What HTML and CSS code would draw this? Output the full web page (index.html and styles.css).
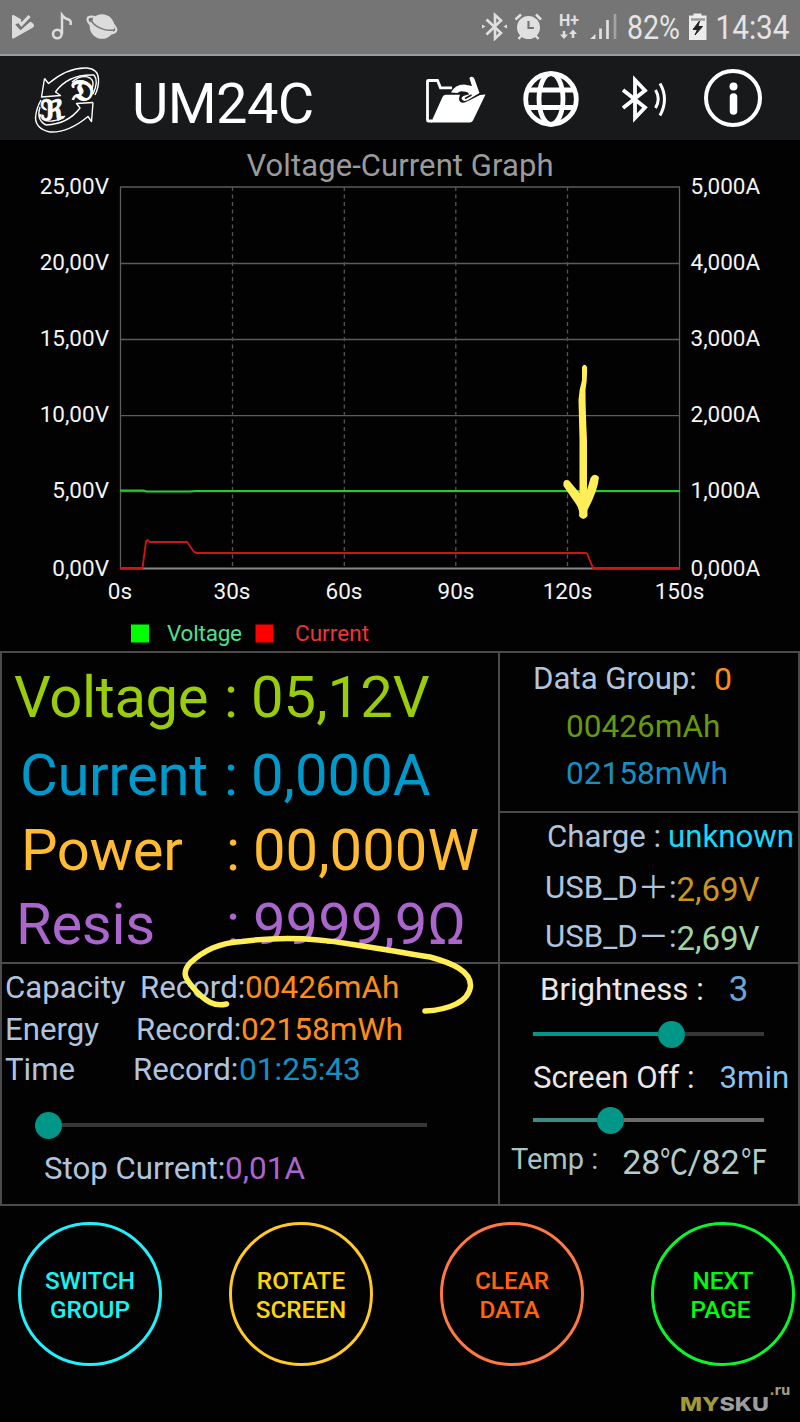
FILE: index.html
```html
<!DOCTYPE html>
<html lang="en">
<head>
<meta charset="utf-8">
<title>UM24C</title>
<link rel="stylesheet" href="styles.css">
</head>
<body>
<div class="screen">
  <header class="status">
    <svg class="status-svg" viewBox="0 0 800 53" width="800" height="53">
      <path d="M12 16Q12 14.500 13.500 15L21.500 19.500L19.500 22L16 25L20.500 29.500L30.500 21.500L33 23.500Q35 25.500 33 27.500L14 38.300Q12 39 12 37.500Z" fill="#dcdcdc"/>
      <path d="M18.500 20.500L21.500 24.500L29.500 16" fill="none" stroke="#dcdcdc" stroke-width="3.200"/>
      <path d="M16 24L20.500 29L30.500 20" fill="none" stroke="#757575" stroke-width="1.800"/>
      <circle cx="57.300" cy="34" r="4.300" fill="none" stroke="#dcdcdc" stroke-width="2.600"/>
      <path d="M62 34V15Q65 19 68.500 19.500Q71.500 20.500 70.500 25" fill="none" stroke="#dcdcdc" stroke-width="2.500"/>
      <circle cx="102" cy="26.500" r="12.300" fill="#dcdcdc"/>
      <path d="M95 17C85 15 86 21 92 26C100 32 113 36 116 31C117.500 28.500 113 24 111.500 22.500" fill="none" stroke="#dcdcdc" stroke-width="2.200"/>
      <path d="M92.500 18.500C88 22 102 32 114 30" fill="none" stroke="#757575" stroke-width="1.600"/>
      <path d="M486.500 19.500L501 33L495 38.500V15L501 20.500L486.500 34.500" fill="none" stroke="#e0e0e0" stroke-width="2.600"/>
      <path d="M482 24.500L485.500 26.500L482 28.500ZM507 24.500L503.500 26.500L507 28.500Z" fill="#e0e0e0"/>
      <circle cx="528.500" cy="27.500" r="11.500" fill="#e0e0e0"/>
      <path d="M515.500 19.500L521 14.500M541 19.500L536 14.500M518.500 39L522 35M538.500 39L535 35" stroke="#e0e0e0" stroke-width="2.500"/>
      <path d="M528.500 21V28H534" fill="none" stroke="#757575" stroke-width="2.200"/>
      <text x="559" y="25.500" class="net" textLength="20" lengthAdjust="spacingAndGlyphs">H+</text>
      <path d="M564 31V37M573 38V32" stroke="#e0e0e0" stroke-width="2.500"/>
      <path d="M560 34.500H568L564 39ZM569 34H577L573 29.500Z" fill="#e0e0e0"/>
      <path d="M590 39L595.500 34V39Z" fill="#e0e0e0"/>
      <path d="M600.500 39V28.500M607.500 39V20" stroke="#e0e0e0" stroke-width="2.700"/>
      <path d="M615 39V14" stroke="#a3a3a3" stroke-width="2.700"/>
      <text x="627" y="39" class="clock" textLength="53" lengthAdjust="spacingAndGlyphs">82%</text>
      <path d="M689 15.500H693.500V13.500H701.500V15.500H706.500V40H689Z" fill="#ececec"/>
      <path d="M691 19.500H705" stroke="#999" stroke-width="2.500"/>
      <path d="M699.500 21L693 29.500H697.500L695 35L702.500 26.500H698Z" fill="#222" stroke="#222"/>
      <text x="715.500" y="39" class="clock" textLength="74" lengthAdjust="spacingAndGlyphs">14:34</text>
    </svg>
  </header>

  <div class="appbar">
    <svg class="logo" viewBox="0 0 70 70" width="70" height="70">
      <g fill="none" stroke="#fff" stroke-width="1.400" stroke-linejoin="round">
        <path d="M12.500 14.500L9.500 33L28.500 31.500L23.500 28Q36 10 62 11"/>
        <path d="M12.500 14.500L16.500 19.500Q36 3 55 4Q66 5 66.500 15Q67 23 63 31"/>
        <path d="M62 11Q67 17 61 30M40 18Q50 10 58 14Q63 17 60 25"/>
        <path d="M61 38.500L44.500 39.500L48 44Q36 60 14 61"/>
        <path d="M61 38.500L59.500 57.500L56 52.500Q36 69 18 68Q4 65 3.500 54Q4 45 9 36"/>
        <path d="M14 61Q4 56 8 43M8 50Q9 58 20 57Q28 56 33 52"/>
      </g>
      <text x="8" y="55.500" class="rune" textLength="24" lengthAdjust="spacingAndGlyphs">ℜ</text>
      <text x="39" y="35.500" class="rune" textLength="23" lengthAdjust="spacingAndGlyphs">𝔇</text>
    </svg>
    <h1 class="title">UM24C</h1>
    <svg class="actions" viewBox="0 0 400 84" width="400" height="84">
      <g transform="translate(0 -1)">
        <path d="M32 66H28Q27.500 66 27.500 65V26Q27.500 25.500 28.500 25.500H37.500L40.500 32.800H52" fill="none" stroke="#fff" stroke-width="2.800"/>
        <path d="M31 67.500L42.500 42Q43.500 39.800 46 39.800H60Q57.500 46 61.500 47.500Q64 48.500 68 46L80 40L85.500 39.500L73 65.500Q72 67.500 69.500 67.500Z" fill="#fff"/>
        <path d="M51 37.500Q55 29.500 64 29.500L72 31L69.500 23.500Q69.500 21.500 72 21.800Q73.800 22 74.500 24L79.500 38L67 45.500Q62.500 47 61.500 43.500Q61.500 40.500 69 39.500Q68.500 36.500 63.500 36.500Q60 35.500 57.500 38Z" fill="#fff"/>
        <path d="M65 43.500L71.500 40" stroke="#17191b" fill="none" stroke-width="1.500"/>
      </g>
      <g fill="none" stroke="#fff" stroke-width="4.800">
        <circle cx="151" cy="43" r="25.300"/>
        <ellipse cx="151" cy="43" rx="12" ry="25.300"/>
        <path d="M128 34H174M128 51.500H174"/>
      </g>
      <path d="M223 34L245 51.500L235 62V24L245 34.500L223 52" fill="none" stroke="#fff" stroke-width="3.800"/>
      <path d="M255.500 34Q261 43 255.500 52M260 27.500Q269 43 260 59.500" fill="none" stroke="#fff" stroke-width="3"/>
      <circle cx="333" cy="42" r="27" fill="none" stroke="#fff" stroke-width="4"/>
      <circle cx="333.500" cy="30.500" r="4" fill="#fff"/>
      <path d="M333.500 41V55" stroke="#fff" stroke-width="7.500" stroke-linecap="round"/>
    </svg>
  </div>

  <section class="chart">
    <svg viewBox="0 140 800 511" width="800" height="511">
      <text x="400" y="176" class="chart-title" text-anchor="middle" textLength="307">Voltage-Current Graph</text>
      <g stroke="#5c5c5c" stroke-width="1.300">
        <path d="M120 187H680M120 263.500H680M120 339.500H680M120 415.700H680M120 491.500H680"/>
        <path d="M120.500 187V568.500M679.500 187V568.500"/>
      </g>
      <path d="M120 568.500H680" stroke="#888" stroke-width="2"/>
      <path d="M232.500 187V568M344.300 187V568M455.800 187V568M567.500 187V568" stroke="#555" stroke-width="1.300" stroke-dasharray="4 3.500"/>
      <path d="M120 490.500H143L147 491.500H190L195 491H680" fill="none" stroke="#22cc2c" stroke-width="2"/>
      <path d="M120 568H142.500L146 541.500L147.500 540L150 542H187L194 552L197 553H585L587 553.500L593 568H680" fill="none" stroke="#cd1518" stroke-width="1.900"/>
      <g class="tick" text-anchor="end">
        <text x="109" y="193.700">25,00V</text><text x="109" y="269.800">20,00V</text><text x="109" y="346">15,00V</text>
        <text x="109" y="422.200">10,00V</text><text x="109" y="498.400">5,00V</text><text x="109" y="575.500">0,00V</text>
      </g>
      <g class="tick">
        <text x="690.500" y="193.700">5,000A</text><text x="690.500" y="269.800">4,000A</text><text x="690.500" y="346">3,000A</text>
        <text x="690.500" y="422.200">2,000A</text><text x="690.500" y="498.400">1,000A</text><text x="690.500" y="575.500">0,000A</text>
      </g>
      <g class="tick" text-anchor="middle">
        <text x="120" y="598.500">0s</text><text x="232" y="598.500">30s</text><text x="344" y="598.500">60s</text>
        <text x="456" y="598.500">90s</text><text x="567.500" y="598.500">120s</text><text x="679.500" y="598.500">150s</text>
      </g>
      <path d="M131 624.500H149V642.500H131Z" fill="#0f0"/>
      <path d="M255.500 624.500H273.500V642.500H255.500Z" fill="#f00"/>
      <text x="167" y="641.200" class="tick green" textLength="75">Voltage</text>
      <text x="295" y="641.200" class="tick red" textLength="74">Current</text>
    </svg>
  </section>

  <main class="monitor">
    <div class="col left">
      <section class="cell readings">
        <div class="reading volt"><span>Voltage</span><span>:</span><span>05,12V</span></div>
        <div class="reading amp"><span>Current</span><span>:</span><span>0,000A</span></div>
        <div class="reading watt"><span>Power</span><span>:</span><span>00,000W</span></div>
        <div class="reading ohm"><span>Resis</span><span>:</span><span>9999,9Ω</span></div>
      </section>
      <section class="cell records">
        <div class="record r1"><span>Capacity</span><span>Record:</span><b class="orange">00426mAh</b></div>
        <div class="record r2"><span>Energy</span><span>Record:</span><b class="orange">02158mWh</b></div>
        <div class="record r3"><span>Time</span><span>Record:</span><b class="blue">01:25:43</b></div>
        <div class="slider stop"><i class="fill"></i><i class="thumb"></i><i class="rest"></i></div>
        <div class="record stop-row"><span>Stop Current:</span><b class="purple">0,01A</b></div>
      </section>
    </div>
    <div class="col right">
      <section class="cell group">
        <div class="row g1"><span>Data Group:</span><b class="orange">0</b></div>
        <div class="row g2">00426mAh</div>
        <div class="row g3">02158mWh</div>
      </section>
      <section class="cell charge">
        <div class="row c1"><span>Charge :</span><b>unknown</b></div>
        <div class="row c2"><span>USB_D<em>＋</em>:</span><b>2,69V</b></div>
        <div class="row c3"><span>USB_D<em>－</em>:</span><b>2,69V</b></div>
      </section>
      <section class="cell settings">
        <div class="row s1"><span>Brightness :</span><b>3</b></div>
        <div class="slider bright"><i class="fill"></i><i class="thumb"></i><i class="rest"></i></div>
        <div class="row s2"><span>Screen Off :</span><b>3min</b></div>
        <div class="slider off"><i class="fill"></i><i class="thumb"></i><i class="rest"></i></div>
        <div class="row s3"><span>Temp :</span><b>28<em>℃</em>/82<em>℉</em></b></div>
      </section>
    </div>
  </main>

  <nav class="buttons">
    <button class="round cyan">SWITCH<br>GROUP</button>
    <button class="round gold">ROTATE<br>SCREEN</button>
    <button class="round coral">CLEAR<br><span class="nudge">DATA</span></button>
    <button class="round lime">NEXT<br><span class="nudge">PAGE</span></button>
  </nav>

  <footer class="brand">
    <svg viewBox="0 0 120 40" width="120" height="40">
      <text x="0" y="28.500" class="mysku" textLength="89" lengthAdjust="spacingAndGlyphs"><tspan fill="#a09a3c">MY</tspan><tspan fill="#9d9d9d">SKU</tspan></text>
      <text x="89.500" y="13" class="ru" textLength="21" lengthAdjust="spacingAndGlyphs"><tspan fill="#a09a3c">.</tspan><tspan fill="#9d9d8c">ru</tspan></text>
    </svg>
  </footer>

  <!-- hand-drawn marks over the chart and the capacity record -->
  <svg class="marks" viewBox="0 0 800 1422" width="800" height="1422">
    <path d="M582 367Q584.500 362.500 587 367Q587.500 378 585.500 390Q585.500 410 587 440L587 490L590.500 478Q594 472 599 477Q598 490 587.500 510V516Q583.500 522 579 516Q580 510 576 504L563.500 486Q562.500 478.500 569 480.500L579.500 493V440L578.500 400Q579 390 582 380Z" fill="#ffee58"/>
    <path d="M226.500 1004C214 1007 206 1001 197 992C185 979 181 973 190 963C204 950 219 943 242 941.500C275 937 310 937 350 944C383 949 405 953 430 957C452 963 471 971 470.500 986C469 1002 448 1010 425 1011" fill="none" stroke="#ffee58" stroke-width="5.500" stroke-linecap="round" stroke-linejoin="round"/>
  </svg>
</div>
</body>
</html>
```
FILE: styles.css
```css
* { box-sizing: border-box; }
body { margin: 0; background: #020202; font-family: Roboto, "Noto Sans CJK SC", sans-serif; }
svg { display: block; }
b, i, em { font-weight: 400; font-style: normal; }

.screen { position: relative; width: 800px; height: 1422px; overflow: hidden; background: #020202; }
.status { height: 56px; background: #757575; border-bottom: 2px solid #9b9b9b; }
.clock { font-size: 33px; fill: #e4e4e4; }
.net { font-size: 16px; font-weight: 700; fill: #e0e0e0; }

.appbar { display: flex; height: 84px; background: #17191b; }
.logo { margin: 8px 0 0 32px; }
.rune { font: 700 28px "DejaVu Sans", "DejaVu Serif", serif; fill: #fff; stroke: #fff; stroke-width: 0.800px; }
.title { width: 268px; margin: 0; padding-left: 30px; font-size: 56px; font-weight: 400; line-height: 97px; letter-spacing: -0.600px; color: #fff; }
.actions { margin-left: 30px; }

.chart { height: 511px; }
.chart-title { font-size: 31px; fill: #9a9a9a; }
.tick { font-size: 22.500px; fill: #f4f4f4; }
.green { fill: #4fe08a; }
.red { fill: #ee3434; }

.monitor { display: flex; height: 555px; border: 2px solid #4b4b4b; }
.left { width: 498px; border-right: 2px solid #4b4b4b; }
.right { flex: 1; }
.cell + .cell { border-top: 2px solid #4b4b4b; }

.readings { height: 309px; padding-top: 14px; }
.reading { display: grid; grid-template-columns: 222px 27px 1fr; font-size: 58px; line-height: 60px; white-space: nowrap; }
.reading span:first-child { letter-spacing: -0.350px; }
.volt { color: #99cc0a; }
.volt span:first-child { padding-left: 12px; }
.amp { margin-top: 17.500px; color: #0099cc; }
.amp span:first-child { padding-left: 18px; }
.watt { margin-top: 15.500px; grid-template-columns: 224px 27px 1fr; color: #ffbb33; }
.watt span:first-child { padding-left: 19px; }
.ohm { margin-top: 13.500px; grid-template-columns: 224px 27px 1fr; color: #aa66cc; }
.ohm span:first-child { padding-left: 14px; }

.records { height: 242px; padding-top: 4px; }
.record { display: grid; font-size: 31.200px; line-height: 40px; color: #b0c4de; white-space: nowrap; }
.record span:first-child { padding-left: 3px; }
.record b { font-size: 31.600px; }
.r1 { grid-template-columns: 138px 105px 1fr; }
.r2 { grid-template-columns: 134px 105px 1fr; margin-top: 2px; }
.r3 { grid-template-columns: 131px 106px 1fr; }
.orange { color: #ff8c1a; }
.blue { color: #1590c4; }
.purple { color: #aa66cc; }
.stop-row { grid-template-columns: 223px 1fr; margin-top: 10px; }
.stop-row span:first-child { padding-left: 42px; }

.slider { display: flex; align-items: center; height: 28px; }
.fill { height: 4px; background: #009688; }
.rest { flex: 1; height: 4px; background: #363636; }
.thumb { width: 27px; height: 27px; border-radius: 50%; background: #009688; }
.stop { width: 392px; margin: 21px 0 0 33px; }
.bright { width: 231px; margin: 10px 0 0 33px; }
.bright .fill { width: 125px; }
.off { width: 231px; margin: 8px 0 0 33px; }
.off .fill { width: 64px; background: #3f8a84; }
.off .rest { background: #6c6a6c; }

.row { display: flex; font-size: 31.200px; line-height: 40px; color: #b0c4de; white-space: nowrap; }
.group { height: 158px; padding-top: 6px; }
.g1 { padding-left: 33px; }
.g1 b { margin-left: 17px; font-size: 32px; }
.g2 { margin: 8px 0 0 66px; font-size: 31.600px; color: #669910; }
.g3 { margin: 7px 0 0 66px; font-size: 31.600px; color: #1590c4; }
.charge { height: 151px; padding-top: 4px; }
.c1 { padding-left: 47px; }
.c1 b { margin-left: 7px; color: #18d8f8; }
.c2 { margin-top: 11px; padding-left: 45px; }
.c3 { margin-top: 9px; padding-left: 45px; }
.c2 b, .c3 b { height: 40px; padding-top: 2px; font-size: 33px; }
.c2 b { color: #cc9420; }
.c3 b { color: #a0d4a0; }
.settings { height: 242px; padding-top: 6px; }
.s1 { padding-left: 40px; color: #ece6e6; }
.s1 b { margin-left: 25px; font-size: 35px; color: #6ea4d4; }
.s2 { margin-top: 10px; padding-left: 33px; color: #ece6e6; }
.s2 b { margin-left: 25px; color: #87c4f4; }
.s3 { height: 40px; margin-top: 5px; padding-left: 11px; font-size: 29px; color: #a8c4c4; }
.s3 b { margin: 3px 0 0 24px; font-size: 34px; color: #b4cccc; }
.s3 em { display: inline-block; margin: 0 -4px 0 -3px; transform: scaleX(0.820); }

.buttons { display: flex; gap: 67px; padding: 16px 0 0 18px; }
.round { flex: none; width: 144px; height: 144px; padding: 2px 0 0; border: 3px solid; border-radius: 50%; background: none; font: 500 24.300px/29px Roboto, sans-serif; text-align: center; }
.nudge { padding-right: 5px; }
.cyan { color: #18f4f4; border-color: #24f0fc; }
.gold { color: #fcd410; border-color: #ffca28; }
.coral { color: #ff6410; border-color: #ff7846; }
.lime { color: #00fa10; border-color: #0cf42c; }

.brand { display: flex; justify-content: flex-end; margin-top: 16px; }
.mysku { font: 800 19px Inter, sans-serif; }
.ru { font: 700 14px "DejaVu Sans", sans-serif; }
.marks { position: absolute; top: 0; left: 0; pointer-events: none; }
```
